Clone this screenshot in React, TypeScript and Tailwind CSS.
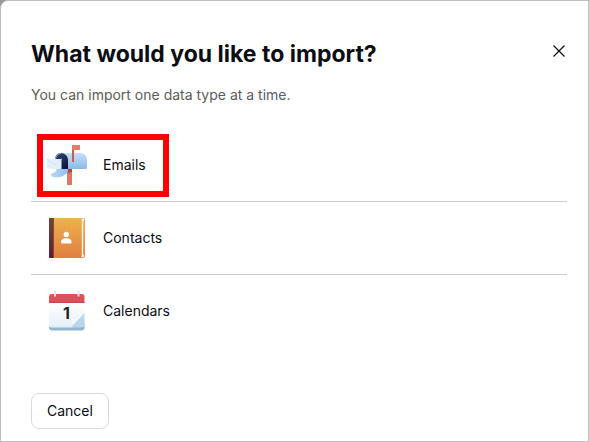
import { useState } from 'react';

function MailboxIcon() {
  return (
    <svg width="40" height="40" viewBox="0 0 40 40" fill="none" aria-hidden="true">
      <defs>
        <linearGradient id="mailBody" x1="0" y1="8" x2="0" y2="24" gradientUnits="userSpaceOnUse">
          <stop stopColor="#c4dffb" />
          <stop offset="1" stopColor="#8cbae7" />
        </linearGradient>
        <linearGradient id="mailInside" x1="8" y1="8" x2="20" y2="24" gradientUnits="userSpaceOnUse">
          <stop stopColor="#34477f" />
          <stop offset="1" stopColor="#0d1236" />
        </linearGradient>
        <linearGradient id="mailDoor" x1="4" y1="30" x2="21" y2="24" gradientUnits="userSpaceOnUse">
          <stop stopColor="#b4d7fa" />
          <stop offset="1" stopColor="#90c0ee" />
        </linearGradient>
      </defs>
      <path d="M20 22h5v18h-5z" fill="#d97863" />
      <path d="M20 24h5v3l-5 1z" fill="#a9483f" />
      <path d="M14 8h19c4.500 0 7 3 7 7v7.500c0 1-.6 1.500-1.500 1.500H20z" fill="url(#mailBody)" />
      <path d="M8 15c0-4.500 2.500-7 6-7s7 3 7 7v9H8z" fill="url(#mailInside)" />
      <path d="M8.500 15c0-4.500 2.500-6.500 5.500-6.500" stroke="#8fbdec" strokeWidth="1" />
      <path d="M0 14h14.500v10.500L0 23.500z" fill="#e3effc" />
      <path d="M0 14l7.500 5.500 7-5.500" stroke="#cfe2f7" strokeWidth="1" />
      <path d="M9 24h12v2.500c-2 3.500-6 5.800-12 5.800-3.500 0-5.500-1.300-5-2.800.3-1.500 3-1.700 4.200-2.500 1.200-.8 1.800-2 .8-3z" fill="url(#mailDoor)" />
      <path d="M25 0h8v5h-6v12h-2z" fill="#df7c6b" />
      <path d="M25 5h2v12h-2z" fill="#c95b50" />
    </svg>
  );
}

function ContactsIcon() {
  return (
    <svg width="40" height="40" viewBox="0 0 40 40" fill="none" aria-hidden="true">
      <defs>
        <linearGradient id="bookCover" x1="0" y1="0" x2="0" y2="40" gradientUnits="userSpaceOnUse">
          <stop stopColor="#efb14d" />
          <stop offset="1" stopColor="#e07f43" />
        </linearGradient>
        <linearGradient id="bookSpine" x1="0" y1="0" x2="0" y2="40" gradientUnits="userSpaceOnUse">
          <stop stopColor="#6b4b33" />
          <stop offset="1" stopColor="#5c1d33" />
        </linearGradient>
      </defs>
      <path d="M6 0h30c1.200 0 2 .6 2 2v36c0 1.200-.8 2-2 2H6z" fill="url(#bookCover)" />
      <path d="M34 .8h2c.8 0 1.200.5 1.200 1.200s-.4 1-1 1.500v33c.6.500 1 .8 1 1.500s-.4 1.200-1.200 1.200h-2c.5-.5.8-1 .8-2V3c0-1-.3-1.700-.8-2.200z" fill="#fff6f0" />
      <path d="M2 1c0-.6.400-1 1-1h4v40H3c-.6 0-1-.4-1-1z" fill="url(#bookSpine)" />
      <path d="M6 0h1v40H6z" fill="#8f4630" />
      <circle cx="19.300" cy="16.500" r="2.700" fill="#fff" />
      <path d="M14 24c0-2.500 2-3.700 5.300-3.700s5.300 1.200 5.300 3.700c0 1.100-.6 1.500-1.500 1.500h-7.600c-.9 0-1.500-.4-1.500-1.500z" fill="#fff" />
    </svg>
  );
}

function CalendarIcon() {
  return (
    <svg width="40" height="40" viewBox="0 0 40 40" fill="none" aria-hidden="true">
      <defs>
        <linearGradient id="calPage" x1="0" y1="12" x2="0" y2="37" gradientUnits="userSpaceOnUse">
          <stop stopColor="#fff" />
          <stop offset="1" stopColor="#e4eef8" />
        </linearGradient>
        <linearGradient id="calFold" x1="26" y1="26" x2="34" y2="37" gradientUnits="userSpaceOnUse">
          <stop stopColor="#ffffff" />
          <stop offset="1" stopColor="#d3e6f4" />
        </linearGradient>
      </defs>
      <path d="M2 32h35.500v4.500c0 2-1.200 3-3 3H5c-2 0-3-1.200-3-3z" fill="#8fb5cf" />
      <path d="M2 12h35.500v11L25 36.500H4c-1.300 0-2-.8-2-2z" fill="url(#calPage)" />
      <path d="M37.500 22v11c0 2.500-1 3.500-3 3.500H24z" fill="#b9d6ea" />
      <path d="M22 36.500c2.500-2 3.500-5 2.500-8.500 5 0 10-1.500 13-6z" fill="url(#calFold)" />
      <path d="M2 6c0-2 1-3 3-3h29.500c2 0 3 1 3 3v6H2z" fill="#dc5159" />
      <path d="M2 11h35.500v1H2z" fill="#c9444e" />
      <path d="M7 0h2v5.500H7zM30.500 0h2v5.500h-2z" fill="#d6e8f5" />
      <text x="19.500" y="28" textAnchor="middle" fontFamily="Inter, sans-serif" fontSize="16" fontWeight="700" fill="#1e2228">1</text>
    </svg>
  );
}

function CloseIcon() {
  return (
    <svg width="16" height="16" viewBox="0 0 16 16" fill="none" stroke="#0c0c14" strokeWidth="1.200" aria-hidden="true">
      <path d="M2.500 2.500l11 11M13.500 2.500l-11 11" />
    </svg>
  );
}

const importTypes = [
  { id: 'emails', label: 'Emails', icon: <MailboxIcon /> },
  { id: 'contacts', label: 'Contacts', icon: <ContactsIcon /> },
  { id: 'calendars', label: 'Calendars', icon: <CalendarIcon /> },
];

export default function App() {
  const [selected, setSelected] = useState('emails');

  return (
    <div className="bg-[#999999] font-['Inter',sans-serif] text-[#0c0c14]">
      <div className="flex min-h-screen flex-col rounded-tl-lg border border-[#bfbfbf] bg-white pt-[37px] pr-[21px] pb-3 pl-[30px]">
        <header className="flex items-center justify-between">
          <h1 className="text-[23px] leading-8 font-bold">What would you like to import?</h1>
          <button type="button" aria-label="Close" className="mb-1.5 cursor-pointer">
            <CloseIcon />
          </button>
        </header>
        <p className="mt-[15px] text-sm leading-5 text-[#5c5c5c]">You can import one data type at a time.</p>

        <ul className="mt-6 divide-y divide-[#cccccc]">
          {importTypes.map((type) => (
            <li key={type.id} className="relative">
              <button
                type="button"
                onClick={() => setSelected(type.id)}
                className="flex h-[72px] w-full cursor-pointer items-center gap-4 px-4 text-left text-sm"
              >
                {type.icon}
                {type.label}
              </button>
              {selected === type.id && (
                <span className="pointer-events-none absolute top-[5px] left-1.5 h-[63px] w-[132px] border-[6px] border-[#ff0000]" />
              )}
            </li>
          ))}
        </ul>

        <footer className="mt-auto">
          <button type="button" className="h-9 cursor-pointer rounded-lg border border-[#dadada] px-[15px] text-sm">
            Cancel
          </button>
        </footer>
      </div>
    </div>
  );
}
